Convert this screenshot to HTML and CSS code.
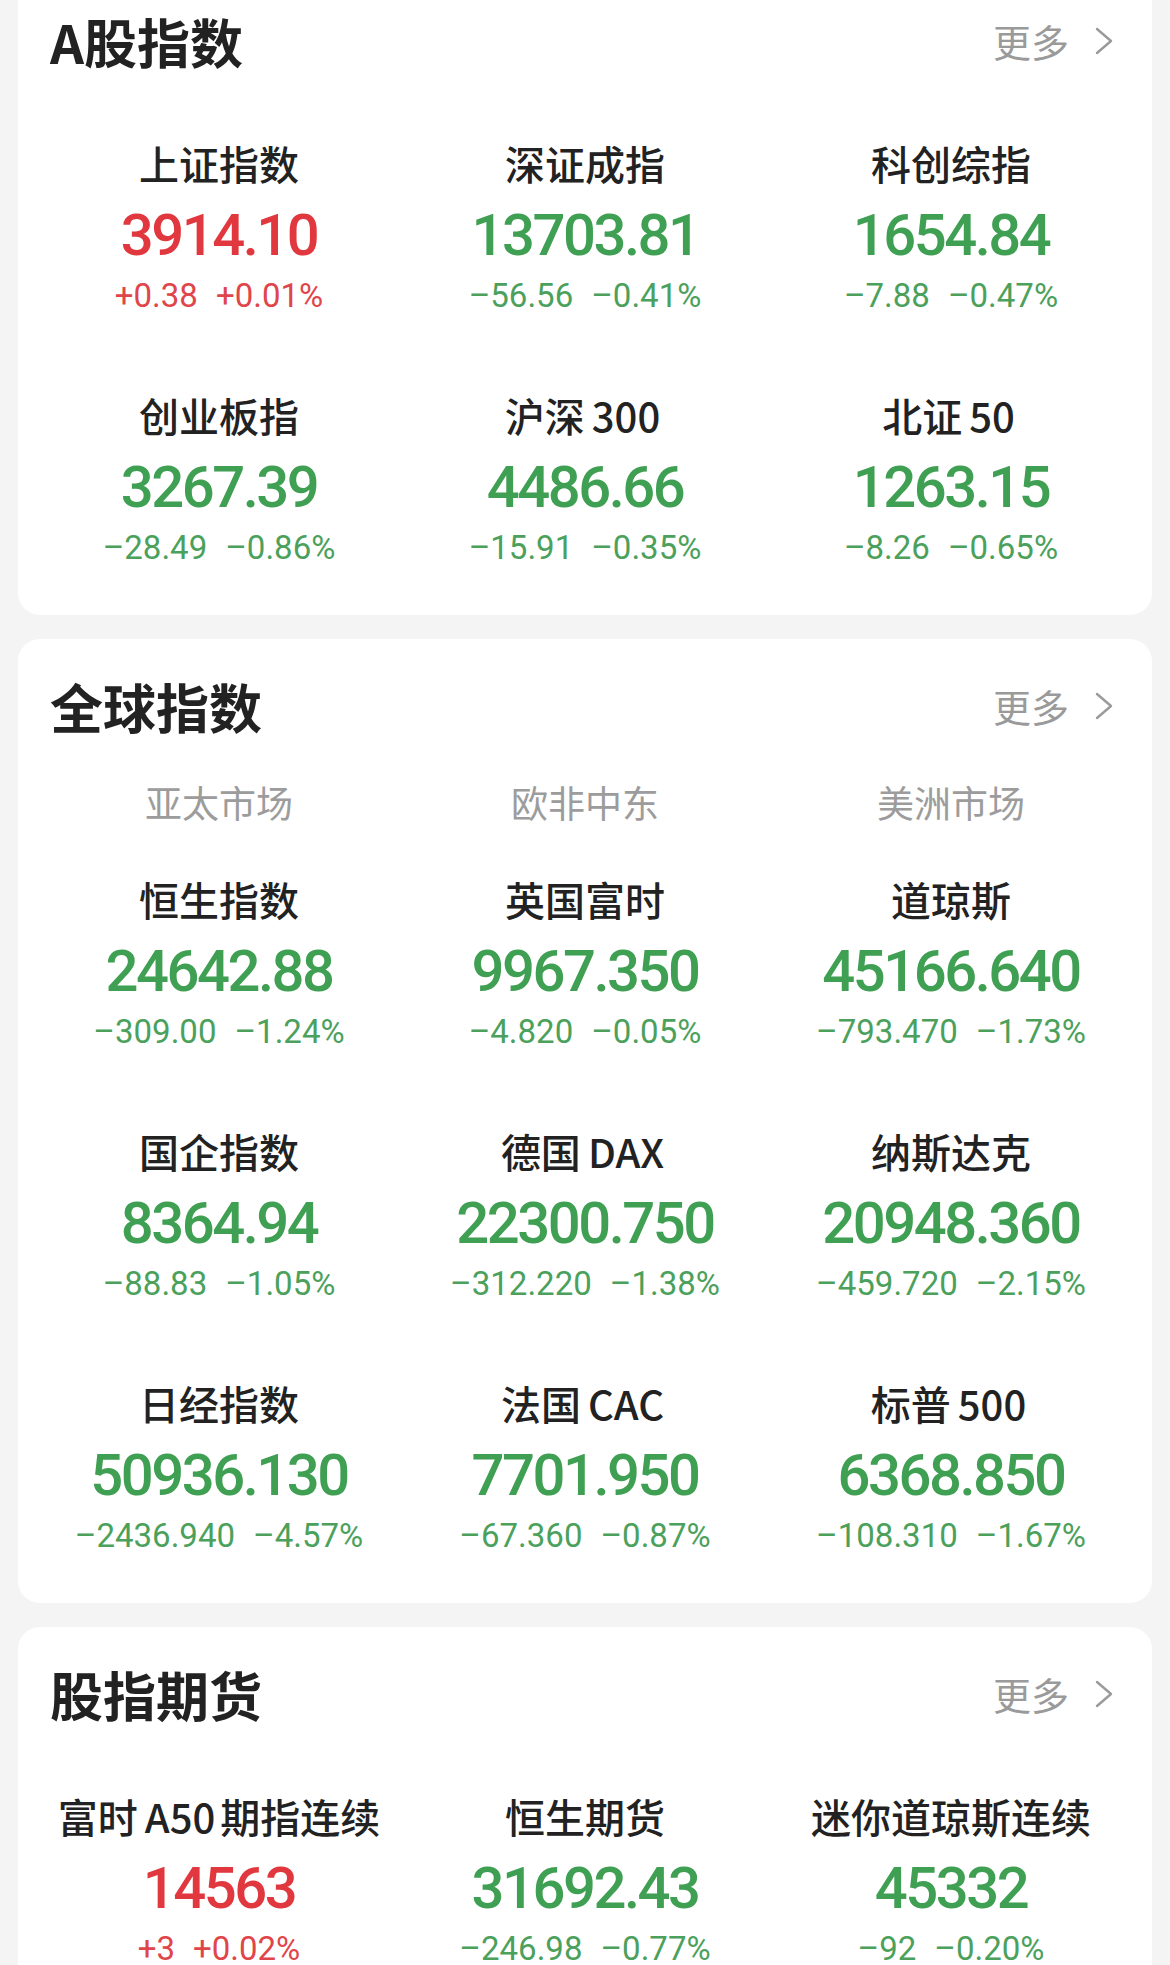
FILE: index.html
```html
<!DOCTYPE html>
<html lang="zh-CN">
<head>
<meta charset="utf-8">
<title>行情</title>
<link rel="stylesheet" href="styles.css">
</head>
<body>
<main class="page">
  <section class="card card-first">
    <header class="card-head">
      <h2 class="card-title">A股指数</h2>
      <a class="more">更多<svg class="chev" viewBox="0 0 18 28"><polyline points="2,2 16,14 2,26"/></svg></a>
    </header>
    <div class="grid">
      <div class="item up"><div class="name">上证指数</div><div class="value">3914.10</div><div class="change"><span>+0.38</span><span>+0.01%</span></div></div>
      <div class="item down"><div class="name">深证成指</div><div class="value">13703.81</div><div class="change"><span>–56.56</span><span>–0.41%</span></div></div>
      <div class="item down"><div class="name">科创综指</div><div class="value">1654.84</div><div class="change"><span>–7.88</span><span>–0.47%</span></div></div>
      <div class="item down"><div class="name">创业板指</div><div class="value">3267.39</div><div class="change"><span>–28.49</span><span>–0.86%</span></div></div>
      <div class="item down"><div class="name">沪深<span class="lat">300</span></div><div class="value">4486.66</div><div class="change"><span>–15.91</span><span>–0.35%</span></div></div>
      <div class="item down"><div class="name">北证<span class="lat">50</span></div><div class="value">1263.15</div><div class="change"><span>–8.26</span><span>–0.65%</span></div></div>
    </div>
  </section>

  <section class="card">
    <header class="card-head">
      <h2 class="card-title">全球指数</h2>
      <a class="more">更多<svg class="chev" viewBox="0 0 18 28"><polyline points="2,2 16,14 2,26"/></svg></a>
    </header>
    <div class="regions">
      <div>亚太市场</div>
      <div>欧非中东</div>
      <div>美洲市场</div>
    </div>
    <div class="grid grid-after-regions">
      <div class="item down"><div class="name">恒生指数</div><div class="value">24642.88</div><div class="change"><span>–309.00</span><span>–1.24%</span></div></div>
      <div class="item down"><div class="name">英国富时</div><div class="value">9967.350</div><div class="change"><span>–4.820</span><span>–0.05%</span></div></div>
      <div class="item down"><div class="name">道琼斯</div><div class="value">45166.640</div><div class="change"><span>–793.470</span><span>–1.73%</span></div></div>
      <div class="item down"><div class="name">国企指数</div><div class="value">8364.94</div><div class="change"><span>–88.83</span><span>–1.05%</span></div></div>
      <div class="item down"><div class="name">德国<span class="lat">DAX</span></div><div class="value">22300.750</div><div class="change"><span>–312.220</span><span>–1.38%</span></div></div>
      <div class="item down"><div class="name">纳斯达克</div><div class="value">20948.360</div><div class="change"><span>–459.720</span><span>–2.15%</span></div></div>
      <div class="item down"><div class="name">日经指数</div><div class="value">50936.130</div><div class="change"><span>–2436.940</span><span>–4.57%</span></div></div>
      <div class="item down"><div class="name">法国<span class="lat">CAC</span></div><div class="value">7701.950</div><div class="change"><span>–67.360</span><span>–0.87%</span></div></div>
      <div class="item down"><div class="name">标普<span class="lat">500</span></div><div class="value">6368.850</div><div class="change"><span>–108.310</span><span>–1.67%</span></div></div>
    </div>
  </section>

  <section class="card">
    <header class="card-head">
      <h2 class="card-title">股指期货</h2>
      <a class="more">更多<svg class="chev" viewBox="0 0 18 28"><polyline points="2,2 16,14 2,26"/></svg></a>
    </header>
    <div class="grid">
      <div class="item up"><div class="name">富时<span class="lat">A50</span>期指连续</div><div class="value">14563</div><div class="change"><span>+3</span><span>+0.02%</span></div></div>
      <div class="item down"><div class="name">恒生期货</div><div class="value">31692.43</div><div class="change"><span>–246.98</span><span>–0.77%</span></div></div>
      <div class="item down"><div class="name">迷你道琼斯连续</div><div class="value">45332</div><div class="change"><span>–92</span><span>–0.20%</span></div></div>
    </div>
  </section>
</main>
</body>
</html>
```

FILE: styles.css
```css
html, body {
  margin: 0;
  padding: 0;
  background: #f4f4f4;
  font-family: "Noto Sans CJK SC", "Noto Sans", sans-serif;
  color: #222;
}

.page {
  display: flex;
  flex-direction: column;
  gap: 24px;
  padding: 0 18px;
  overflow: hidden;
}

.card {
  background: #fff;
  border-radius: 22px;
  padding: 35px 18px 48px;
}

.card-first {
  margin-top: -26px;
}

.card-head {
  display: flex;
  justify-content: space-between;
  align-items: center;
  height: 64px;
  padding: 0 21px 0 14px;
}

.card-title {
  margin: 0;
  font-size: 53px;
  line-height: 64px;
  font-weight: 700;
  color: #222;
}

.more {
  display: flex;
  align-items: center;
  font-size: 38px;
  line-height: 64px;
  color: #9a9a9a;
}

.chev {
  width: 18px;
  height: 28px;
  margin-left: 26px;
}

.chev polyline {
  fill: none;
  stroke: #9a9a9a;
  stroke-width: 2.4;
  stroke-linecap: round;
  stroke-linejoin: round;
}

.regions {
  display: grid;
  grid-template-columns: repeat(3, 1fr);
  margin-top: 39px;
  font-size: 37px;
  line-height: 50px;
  color: #9c9c9c;
  text-align: center;
}

.grid {
  display: grid;
  grid-template-columns: repeat(3, 1fr);
  row-gap: 70px;
  margin-top: 60px;
}

.grid-after-regions {
  margin-top: 42px;
}

.item {
  text-align: center;
}

.name {
  font-size: 40px;
  line-height: 60px;
  font-weight: 500;
  color: #222;
  white-space: nowrap;
}

.lat {
  margin-left: 7px;
  margin-right: 5px;
}

.value {
  font-family: Roboto, "Liberation Sans", sans-serif;
  font-weight: 500;
  font-size: 58px;
  line-height: 84px;
  letter-spacing: -2.5px;
}

.change {
  font-family: Roboto, "Liberation Sans", sans-serif;
  font-weight: 400;
  font-size: 33px;
  line-height: 38px;
  white-space: nowrap;
}

.change span + span {
  margin-left: 18px;
}

.up .value { color: #e0383e; }
.up .change { color: #e0454a; }
.down .value { color: #3f9f52; }
.down .change { color: #4ba15c; }
```
